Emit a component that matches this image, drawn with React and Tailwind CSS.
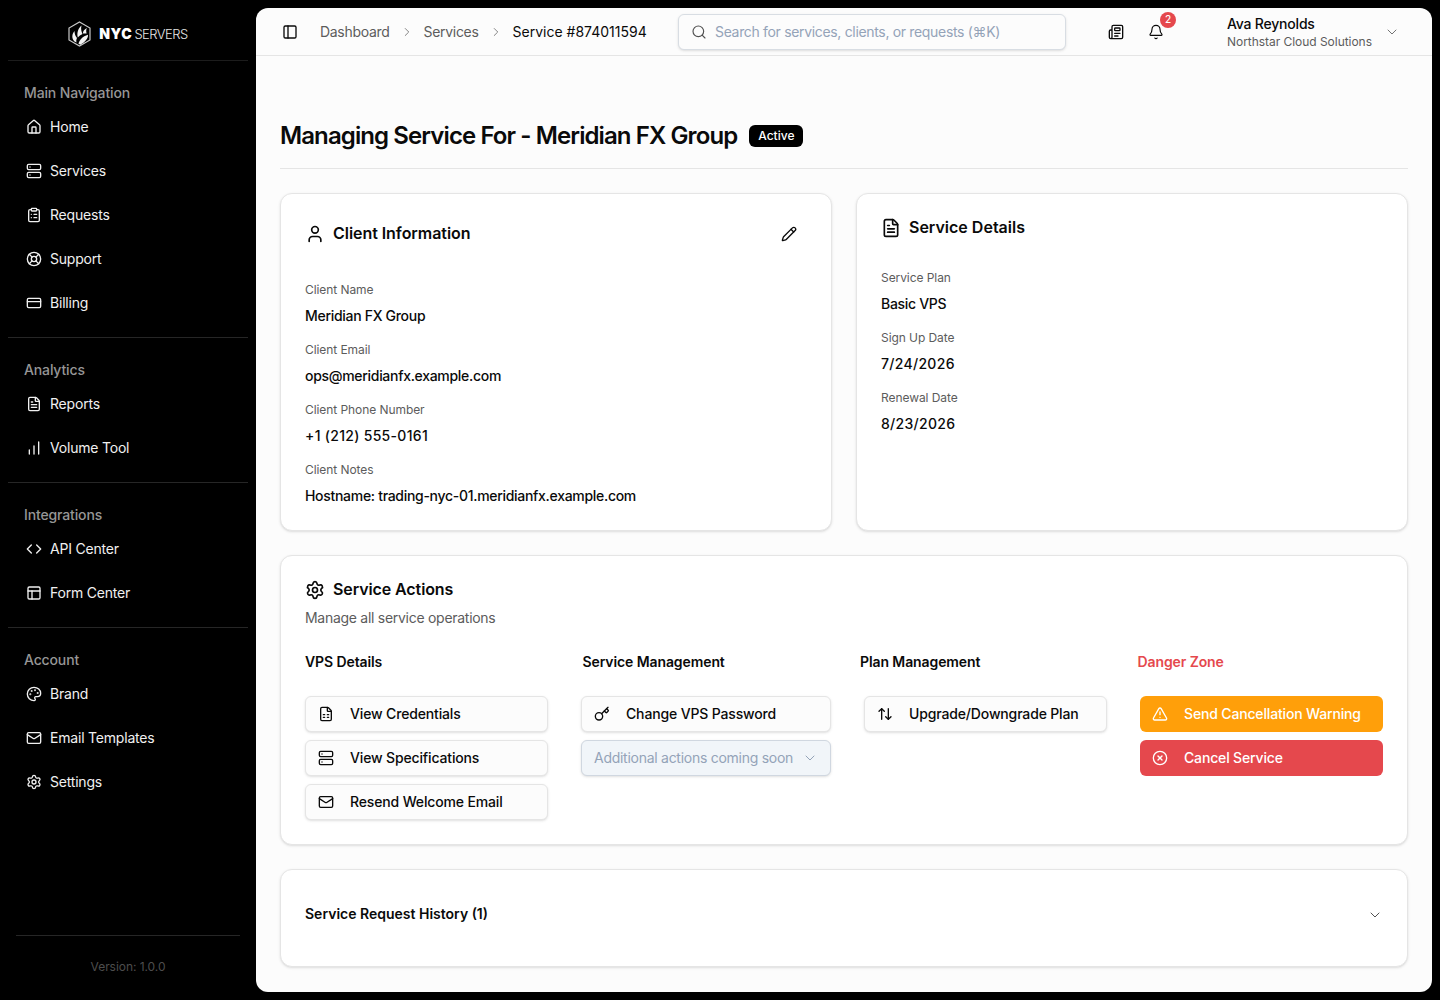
import React from "react";
import {
  House, Server, ClipboardList, LifeBuoy, CreditCard, FileText, ChartNoAxesColumnIncreasing, Code,
  PanelsTopLeft, Palette, Mail, Settings, PanelLeft, ChevronRight, ChevronDown, Search,
  Newspaper, Bell, User, Pencil, FileSpreadsheet, Key, ArrowUpDown, TriangleAlert, CircleX,
} from "lucide-react";

const navGroups = [
  {
    label: "Main Navigation",
    items: [
      { icon: House, text: "Home" },
      { icon: Server, text: "Services" },
      { icon: ClipboardList, text: "Requests" },
      { icon: LifeBuoy, text: "Support" },
      { icon: CreditCard, text: "Billing" },
    ],
  },
  {
    label: "Analytics",
    items: [
      { icon: FileText, text: "Reports" },
      { icon: ChartNoAxesColumnIncreasing, text: "Volume Tool" },
    ],
  },
  {
    label: "Integrations",
    items: [
      { icon: Code, text: "API Center" },
      { icon: PanelsTopLeft, text: "Form Center" },
    ],
  },
  {
    label: "Account",
    items: [
      { icon: Palette, text: "Brand" },
      { icon: Mail, text: "Email Templates" },
      { icon: Settings, text: "Settings" },
    ],
  },
];

const Logo = () => (
  <div className="flex h-[60px] items-center justify-center gap-2 pt-2">
    <svg width="23" height="26" viewBox="0 0 23 26" fill="none">
      <path d="M11.5 1 22 7v12l-10.500 6L1 19V7z" stroke="#c8c8c8" strokeWidth="1.2" />
      <path d="M6.500 20.500C3.500 17.500 3.800 13 6.500 10c0 3 1 5 2.500 7-.6 1.300-1 2.300-.5 4.500z" fill="#f2f2f2" />
      <path d="M9.800 16.500C8.500 11.500 10.500 7 13.500 4.500c-1 3.500 0 6.500 1 8.500-1.800 1-3.400 2-4.700 3.500z" fill="#f2f2f2" />
      <path d="M15 12.500c-.3-2 1.200-4 3.800-5.500-1 2.500-.5 4-.2 5.500-1.300 0-2.500 0-3.600 0z" fill="#f2f2f2" />
      <path d="M10.500 22.800c.8-3.800 4-7.500 9.500-9 .2 3.800-2.800 7-7.500 10z" fill="#f2f2f2" />
    </svg>
    <div className="flex items-baseline text-white">
      <span className="text-sm font-black tracking-[0.6px]">NYC</span>
      <span className="ml-[2px] text-[13px] font-light tracking-[-0.5px] text-[#e5e5e5]">SERVERS</span>
    </div>
  </div>
);

const Sidebar = () => (
  <aside className="flex h-screen w-64 shrink-0 flex-col bg-black">
    <div className="mx-2 border-b border-[#1c1c1c]">
      <Logo />
    </div>
    {navGroups.map((group, i) => (
      <div key={group.label} className={i < navGroups.length - 1 ? "mx-2 border-b border-[#262626] px-4 pt-[22px] pb-4" : "mx-2 px-4 pt-[22px]"}>
        <div className="h-5 text-sm leading-5 font-medium tracking-[-0.14px] text-[#969696]">{group.label}</div>
        <div className="mt-[6px] flex flex-col gap-2">
          {group.items.map((item) => (
            <div key={item.text} className="flex h-9 items-center gap-2 pl-[2px] text-sm tracking-[-0.2px] text-[#f0f0f0]">
              <item.icon size={16} strokeWidth={2} />
              <span>{item.text}</span>
            </div>
          ))}
        </div>
      </div>
    ))}
    <div className="mx-4 mt-auto border-t border-[#262626] pt-[23px] pb-[25px] text-center text-xs leading-4 tracking-[-0.05px] text-[#4d4d4d]">
      Version: 1.0.0
    </div>
  </aside>
);

const Header = () => (
  <header className="flex h-12 shrink-0 items-center border-b border-[#e5e5e5] pl-[26px]">
    <PanelLeft size={16} strokeWidth={2} className="text-[#0a0a0a]" />
    <nav className="ml-[22px] flex w-[358px] items-center text-sm tracking-[-0.3px] text-[#5c5c5c]">
      <span>Dashboard</span>
      <ChevronRight size={14} strokeWidth={1.5} className="mx-[10px] text-[#737373]" />
      <span>Services</span>
      <ChevronRight size={14} strokeWidth={1.5} className="mx-[10px] text-[#737373]" />
      <span className="tracking-normal text-[#0a0a0a]">Service #874011594</span>
    </nav>
    <div className="flex h-9 w-[388px] items-center gap-2 rounded-md border border-[#d8dde3] bg-[#fcfcfc] pl-3 shadow-sm">
      <Search size={16} strokeWidth={1.75} className="text-[#525252]" />
      <span className="text-sm tracking-[-0.33px] text-[#94a3b8]">Search for services, clients, or requests (⌘K)</span>
    </div>
    <Newspaper size={16} strokeWidth={2} className="ml-[42px] text-[#0a0a0a]" />
    <div className="relative ml-6 h-4 w-4">
      <Bell size={16} strokeWidth={1.75} className="text-[#0a0a0a]" />
      <span className="absolute -top-[12px] left-[4px] ml-2 flex h-4 w-4 items-center justify-center rounded-full bg-[#e5484d] text-[10px] font-medium text-white">2</span>
    </div>
    <div className="ml-[63px] flex flex-col">
      <span className="text-sm leading-5 font-medium tracking-[-0.2px] text-[#0a0a0a]">Ava Reynolds</span>
      <span className="text-xs leading-4 tracking-[-0.04px] text-[#5c5c5c]">Northstar Cloud Solutions</span>
    </div>
    <ChevronDown size={16} strokeWidth={1.5} className="ml-[12px] text-[#737373]" />
  </header>
);

const Field = ({ label, value, numeric }) => (
  <div>
    <div className="text-xs leading-4 tracking-[-0.07px] text-[#5c5c5c]">{label}</div>
    <div className={`mt-2 text-sm leading-5 font-medium text-[#0a0a0a] ${numeric ? "tracking-[0.3px]" : "tracking-[-0.3px]"}`}>{value}</div>
  </div>
);

const Card = ({ className = "", children }) => (
  <section className={`rounded-xl border border-[#e5e5e5] bg-white p-6 shadow-sm ${className}`}>{children}</section>
);

const ActionButton = ({ icon: Icon, children }) => (
  <button className="flex h-9 w-full items-center gap-4 rounded-md border border-[#e5e5e5] bg-[#fcfcfc] px-3 text-sm font-medium tracking-[-0.15px] text-[#0a0a0a] shadow-sm">
    <Icon size={16} strokeWidth={2} />
    {children}
  </button>
);

const ServiceActions = () => (
  <Card className="mt-6">
    <div className="flex h-5 items-center gap-2 text-base font-semibold tracking-[-0.1px] text-[#0a0a0a]">
      <Settings size={20} strokeWidth={2} />
      <span className="pb-[2px]">Service Actions</span>
    </div>
    <p className="mt-2 text-sm leading-5 tracking-[-0.28px] text-[#5c5c5c]">Manage all service operations</p>
    <div className="mt-6 grid grid-cols-4 gap-8 text-sm leading-5 font-semibold tracking-[-0.1px] text-[#0a0a0a]">
      <div>VPS Details</div>
      <div>Service Management</div>
      <div>Plan Management</div>
      <div className="text-[#e5484d]">Danger Zone</div>
    </div>
    <div className="mt-6 flex justify-between">
      <div className="flex w-[243px] flex-col gap-2">
        <ActionButton icon={FileSpreadsheet}>View Credentials</ActionButton>
        <ActionButton icon={Server}>View Specifications</ActionButton>
        <ActionButton icon={Mail}>Resend Welcome Email</ActionButton>
      </div>
      <div className="flex w-[250px] flex-col gap-2">
        <ActionButton icon={Key}>Change VPS Password</ActionButton>
        <div className="flex h-9 items-center justify-between rounded-md border border-[#d0d7e0] bg-[#f1f5f9] px-3 text-sm tracking-[-0.27px] text-[#94a3b8] shadow-sm">
          <span>Additional actions coming soon</span>
          <ChevronDown size={16} strokeWidth={1.5} />
        </div>
      </div>
      <div className="w-[243px]">
        <ActionButton icon={ArrowUpDown}>Upgrade/Downgrade Plan</ActionButton>
      </div>
      <div className="flex w-[243px] flex-col gap-2">
        <button className="flex h-9 items-center gap-4 rounded-md bg-[#ff9f0a] px-3 text-sm font-medium tracking-[-0.16px] text-white">
          <TriangleAlert size={16} strokeWidth={2} />
          Send Cancellation Warning
        </button>
        <button className="flex h-9 items-center gap-4 rounded-md bg-[#e5484d] px-3 text-sm font-medium tracking-[-0.16px] text-white">
          <CircleX size={16} strokeWidth={2} />
          Cancel Service
        </button>
      </div>
    </div>
  </Card>
);

export default function App() {
  return (
    <div className="flex h-screen overflow-hidden bg-black [font-family:Inter,sans-serif]">
      <Sidebar />
      <main className="my-2 mr-2 flex flex-1 flex-col overflow-hidden rounded-xl bg-[#fcfcfc]">
        <Header />
        <div className="px-6 pt-16">
          <div className="flex items-center gap-3 border-b border-[#e5e5e5] pb-4">
            <h1 className="text-2xl leading-8 font-semibold tracking-[-0.9px] text-[#0a0a0a]">Managing Service For - Meridian FX Group</h1>
            <span className="rounded-md bg-black px-[9px] py-[3px] text-xs leading-4 font-medium text-white">Active</span>
          </div>

          <div className="mt-6 grid grid-cols-2 gap-6">
            <Card>
              <div className="flex h-8 items-center justify-between">
                <div className="flex items-center gap-2 text-base font-semibold tracking-[-0.05px] text-[#0a0a0a]">
                  <User size={20} strokeWidth={2} />
                  <span className="pb-[2px]">Client Information</span>
                </div>
                <span className="mr-[2px] flex h-8 w-8 items-center justify-center text-[#0a0a0a]">
                  <Pencil size={16} strokeWidth={2} />
                </span>
              </div>
              <div className="mt-8 flex flex-col gap-4">
                <Field label="Client Name" value="Meridian FX Group" />
                <Field label="Client Email" value="ops@meridianfx.example.com" />
                <Field label="Client Phone Number" value="+1 (212) 555-0161" numeric />
                <Field label="Client Notes" value="Hostname: trading-nyc-01.meridianfx.example.com" />
              </div>
            </Card>
            <Card>
              <div className="flex h-5 items-center gap-2 text-base font-semibold text-[#0a0a0a]">
                <FileText size={20} strokeWidth={2} />
                <span className="pb-[2px]">Service Details</span>
              </div>
              <div className="mt-8 flex flex-col gap-4">
                <Field label="Service Plan" value="Basic VPS" />
                <Field label="Sign Up Date" value="7/24/2026" numeric />
                <Field label="Renewal Date" value="8/23/2026" numeric />
              </div>
            </Card>
          </div>

          <ServiceActions />

          <section className="mt-6 rounded-xl border border-[#e5e5e5] bg-white px-6 pt-6 pb-8 shadow-sm">
            <div className="flex h-10 items-center justify-between text-sm font-semibold text-[#0a0a0a]">
              <span>Service Request History (1)</span>
              <ChevronDown size={16} strokeWidth={1.5} className="mt-[2px] text-[#525252]" />
            </div>
          </section>
        </div>
      </main>
    </div>
  );
}
